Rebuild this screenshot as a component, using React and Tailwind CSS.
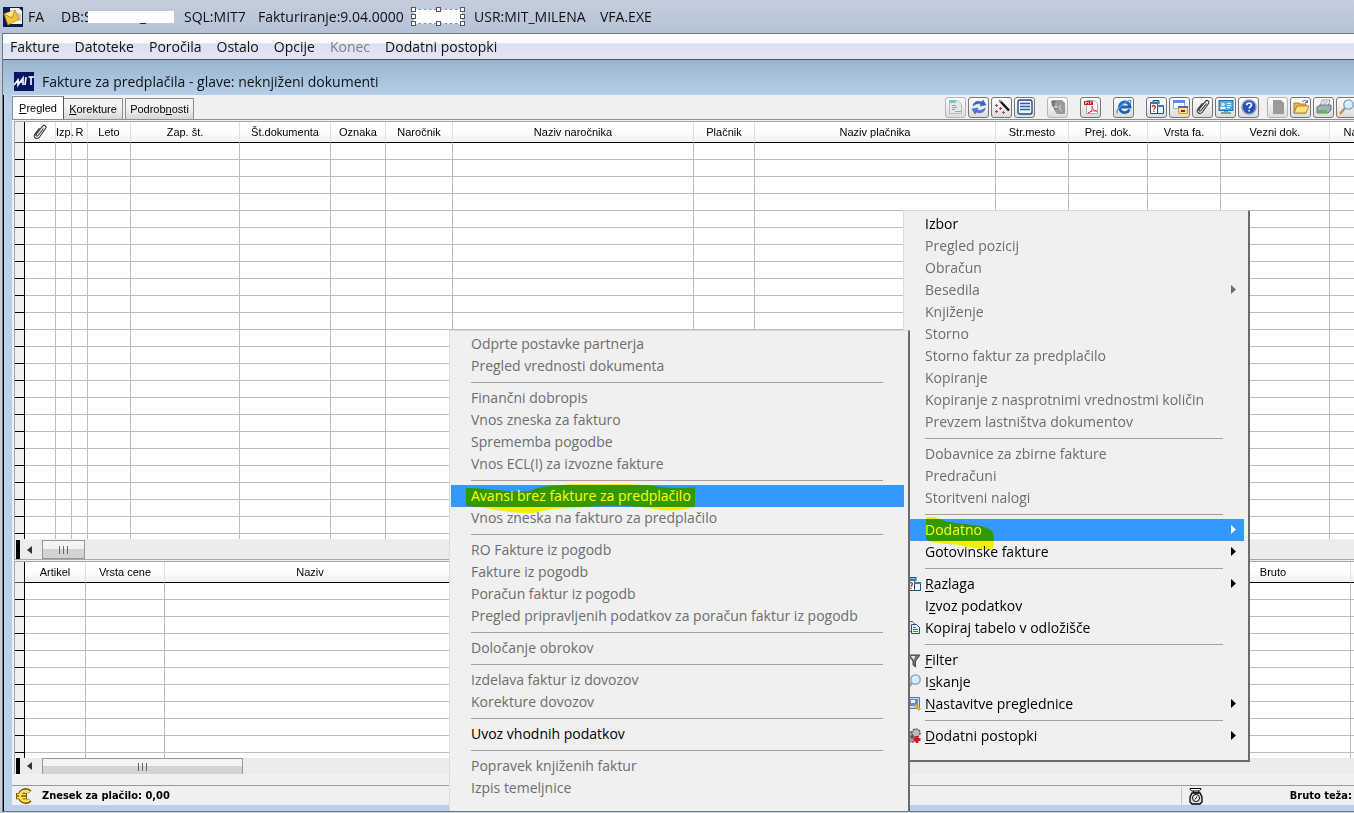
import clsx from 'clsx'

const MENU_BAR = ['Fakture', 'Datoteke', 'Poročila', 'Ostalo', 'Opcije', 'Konec', 'Dodatni postopki']

const INVOICE_COLUMNS = [
  { label: '', width: 31, clip: true },
  { label: 'Izp.', width: 16 },
  { label: 'R', width: 16 },
  { label: 'Leto', width: 43 },
  { label: 'Zap. št.', width: 109 },
  { label: 'Št.dokumenta', width: 91 },
  { label: 'Oznaka', width: 55 },
  { label: 'Naročnik', width: 67 },
  { label: 'Naziv naročnika', width: 241 },
  { label: 'Plačnik', width: 61 },
  { label: 'Naziv plačnika', width: 241 },
  { label: 'Str.mesto', width: 73 },
  { label: 'Prej. dok.', width: 79 },
  { label: 'Vrsta fa.', width: 73 },
  { label: 'Vezni dok.', width: 109 },
  { label: 'Način', width: 56 },
]

const ITEM_COLUMNS = [
  { label: 'Artikel', width: 61 },
  { label: 'Vrsta cene', width: 79 },
  { label: 'Naziv', width: 291 },
  { label: 'Količina', width: 370 },
  { label: 'Neto', width: 370 },
  { label: 'Bruto', width: 155 },
  { label: 'Tara', width: 155 },
]

const MAIN_MENU = [
  { label: 'Izbor' },
  { label: 'Pregled pozicij', disabled: true },
  { label: 'Obračun', disabled: true },
  { label: 'Besedila', disabled: true, sub: true },
  { label: 'Knjiženje', disabled: true },
  { label: 'Storno', disabled: true },
  { label: 'Storno faktur za predplačilo', disabled: true },
  { label: 'Kopiranje', disabled: true },
  { label: 'Kopiranje z nasprotnimi vrednostmi količin', disabled: true },
  { label: 'Prevzem lastništva dokumentov', disabled: true },
  null,
  { label: 'Dobavnice za zbirne fakture', disabled: true },
  { label: 'Predračuni', disabled: true },
  { label: 'Storitveni nalogi', disabled: true },
  null,
  { label: 'Dodatno', active: true, sub: true, marker: 'short' },
  { label: 'Gotovinske fakture', sub: true },
  null,
  { label: 'Razlaga', key: 0, sub: true, icon: 'explain' },
  { label: 'Izvoz podatkov', key: 1 },
  { label: 'Kopiraj tabelo v odložišče', icon: 'copy' },
  null,
  { label: 'Filter', key: 0, icon: 'filter' },
  { label: 'Iskanje', key: 1, icon: 'search' },
  { label: 'Nastavitve preglednice', key: 0, sub: true, icon: 'settings' },
  null,
  { label: 'Dodatni postopki', key: 0, sub: true, icon: 'gears' },
]

const SUB_MENU = [
  { label: 'Odprte postavke partnerja', disabled: true },
  { label: 'Pregled vrednosti dokumenta', disabled: true },
  null,
  { label: 'Finančni dobropis', disabled: true },
  { label: 'Vnos zneska za fakturo', disabled: true },
  { label: 'Sprememba pogodbe', disabled: true },
  { label: 'Vnos ECL(I) za izvozne fakture', disabled: true },
  null,
  { label: 'Avansi brez fakture za predplačilo', active: true, marker: 'long' },
  { label: 'Vnos zneska na fakturo za predplačilo', disabled: true },
  null,
  { label: 'RO Fakture iz pogodb', disabled: true },
  { label: 'Fakture iz pogodb', disabled: true },
  { label: 'Poračun faktur iz pogodb', disabled: true },
  { label: 'Pregled pripravljenih podatkov za poračun faktur iz pogodb', disabled: true },
  null,
  { label: 'Določanje obrokov', disabled: true },
  null,
  { label: 'Izdelava faktur iz dovozov', disabled: true },
  { label: 'Korekture dovozov', disabled: true },
  null,
  { label: 'Uvoz vhodnih podatkov' },
  null,
  { label: 'Popravek knjiženih faktur', disabled: true },
  { label: 'Izpis temeljnice', disabled: true },
]

const TOOL_GROUPS = [
  ['form', 'refresh', 'wand', 'list'],
  ['export'],
  ['pdf'],
  ['browser'],
  ['explain', 'windows', 'clip', 'card', 'help'],
  ['blank', 'open', 'print', 'search'],
]

const DIMMED_TOOLS = ['form', 'export', 'blank']

const ICONS = {
  form: (
    <>
      <path d="M1.500 1.500h8l4 4v9h-12z" fill="#e4e6e8" stroke="#b9bec2" />
      <path d="M1 1h7v3H1z" fill="#7fc4c9" />
      <path d="M4 6.500h4M4 8.500h5M4 10.500h3M7 12.500h6" stroke="#9aa0a5" />
    </>
  ),
  refresh: (
    <>
      <path d="M2 7c0-4 5-6 9-4l1-2 3 5-6 1 1-2C7 4 4 5 2 7z" fill="#2f6fd0" stroke="#1b4a9e" strokeWidth=".5" />
      <path d="M14 9c0 4-5 6-9 4l-1 2-3-5 6-1-1 2c3 1 6 0 8-2z" fill="#3d82e6" stroke="#1b4a9e" strokeWidth=".5" />
    </>
  ),
  wand: (
    <>
      <path d="M6 2l9 9.500" stroke="#111" strokeWidth="2.400" />
      <path d="M5 1l2 2" stroke="#999" strokeWidth="2" />
      <path d="M1 6.500h3M2.500 5v3M5 9.500h3M6.500 8v3M1 12.500h3M2.500 11v3M8 13.500h3M9.500 12v3" stroke="#a4475a" />
    </>
  ),
  list: (
    <>
      <rect x="1" y="1" width="14" height="14" rx="2" fill="#eef4fc" stroke="#234a86" strokeWidth="1.400" />
      <path d="M3 4.500h10M3 7.500h10M3 10.500h10" stroke="#2e5ea6" strokeWidth="1.400" />
    </>
  ),
  export: (
    <>
      <path d="M4 1h8l3 3v11H7l-3-4z" fill="#9a9a9a" />
      <path d="M1 2l3-1 3 3 1 4-2 3-4-4z" fill="#777" />
      <path d="M6 4v5M4 7l2 2 2-2M11 6c-2 2-2 4 1 6" stroke="#e8e8e8" fill="none" />
    </>
  ),
  pdf: (
    <>
      <path d="M3.500 1.500h8l3 3v10h-11z" fill="#fff" stroke="#a9a9a9" />
      <path d="M1 2h9v4H1z" fill="#c9252c" />
      <path d="M2.500 5V3H4v1H3M5.500 3v2M7.500 5V3H9" stroke="#fff" strokeWidth=".6" fill="none" />
      <path d="M5 14c3-1 5-4 4-7 0 3 2 5 5 5-3-.5-6 0-9 2z" fill="none" stroke="#d8434a" />
    </>
  ),
  browser: (
    <>
      <path d="M13.500 10.500A5.300 5.300 0 1 1 14 8H5" fill="none" stroke="#1b62b0" strokeWidth="2.800" />
      <path d="M1.500 14.500C-1 12 6 4 13 1.500c2.500-.5 2 2 1 3.500" fill="none" stroke="#4c9be0" strokeWidth="1.300" />
    </>
  ),
  explain: (
    <>
      <path d="M4 3V1.500h6V5" fill="#8cc0e8" stroke="#1f4e79" />
      <path d="M1.500 3.500h7v11h-7z" fill="#fff" stroke="#1f4e79" />
      <path d="M1 3h8v2H1z" fill="#2f7fb8" />
      <path d="M3.200 8c0-2 3.200-2 3.200 0 0 1.200-1.500 1.200-1.500 2.700M4.900 11.800v1.200" stroke="#d22" strokeWidth="1.300" fill="none" />
      <path d="M8.500 6.500h6v8h-6z" fill="#e9f3fb" stroke="#1f4e79" />
      <path d="M8 6h7v2H8z" fill="#2f7fb8" />
    </>
  ),
  windows: (
    <>
      <path d="M1.500 1.500h11v8h-11z" fill="#fff" stroke="#8fa9d6" />
      <path d="M1 1h12v3H1z" fill="#5b8be0" />
      <path d="M6.500 7.500h9v7h-9z" fill="#ffe37a" stroke="#c9a227" />
      <path d="M6 7h10v2H6z" fill="#3f6fd0" />
      <path d="M9 12h4" stroke="#a00" strokeWidth="1.800" />
    </>
  ),
  clip: (
    <path
      d="M11.500 4.500L6 11.500c-1 1.300-2.800 0-1.800-1.400l6.300-7.800c1.800-2 4.500 0 3 2.200L7.500 13c-2.500 3.200-7 .5-4.700-2.800L7.500 4"
      fill="none"
      stroke="#333"
      strokeWidth="1.100"
    />
  ),
  card: (
    <>
      <rect x="1" y="1.500" width="14" height="10" fill="#58aee6" stroke="#1f6fae" />
      <circle cx="5" cy="5.500" r="1.800" fill="#ffe9a8" />
      <path d="M2.500 10h5V8h-5z" fill="#fff" />
      <path d="M9 4.500h4M9 6.500h4M9 8.500h3" stroke="#fff" />
      <path d="M6 12h4v1h3v2H3v-2h3z" fill="#7aa88d" />
    </>
  ),
  help: (
    <>
      <circle cx="8" cy="8" r="7" fill="#2450b8" stroke="#8c9cc0" strokeWidth="1.400" />
      <path d="M5.700 6.300c0-3 4.800-3 4.800-.2 0 1.700-2.300 1.700-2.300 3.400M8.200 11v1.600" fill="none" stroke="#fff" strokeWidth="1.700" />
    </>
  ),
  blank: <path d="M3 1h8l3 3v11H3z" fill="#9b9b9b" />,
  open: (
    <>
      <path d="M1 4h5l1 1h6v9H1z" fill="#e9b53a" stroke="#9c7420" strokeWidth=".8" />
      <path d="M1 14l3-7h12l-3 7z" fill="#ffdf7c" stroke="#9c7420" strokeWidth=".8" />
      <path d="M9 3c2-2 4-2 5 0M14.500 1v2.500H12" fill="none" stroke="#3d6ea8" />
    </>
  ),
  print: (
    <>
      <path d="M6 1h8l-2 6H4z" fill="#fff" stroke="#7a8896" strokeWidth=".8" />
      <path d="M1 8l3-2h11v5l-3 3H1z" fill="#a3afbf" stroke="#4d5a69" strokeWidth=".8" />
      <path d="M2 11h9v3H2z" fill="#5dbb46" />
      <path d="M7 3h5M6 5h5" stroke="#9ab" />
    </>
  ),
  search: (
    <>
      <path d="M6 9l-5 6" stroke="#c98f4a" strokeWidth="2.400" />
      <circle cx="9.500" cy="5.500" r="4.700" fill="#d4edfb" stroke="#7d9cc0" strokeWidth="1.300" />
      <path d="M7 5c.5-1.500 1.500-2 3-2" fill="none" stroke="#fff" />
    </>
  ),
  copy: (
    <>
      <path d="M1.500 1.500h5l2 2v8h-7z" fill="#dce9fa" stroke="#3c62a8" />
      <path d="M5.500 4.500h5l3 3v6h-8z" fill="#f4f9ff" stroke="#2b4f98" />
      <path d="M7 7.500h3M7 9.500h5M7 11.500h5" stroke="#3c70c8" />
    </>
  ),
  filter: (
    <>
      <path d="M2 3h12l-4.500 6v6l-2.500-2V9z" fill="#777" stroke="#444" />
      <path d="M5 4h4L8 8z" fill="#f2f2f2" />
    </>
  ),
  settings: (
    <>
      <path d="M1.500 1.500h12v11h-12z" fill="#cfd9ea" stroke="#5a76a8" />
      <path d="M3 3h9v7H3z" fill="#5f8fcf" />
      <path d="M5 4h4v3H5z" fill="#e9f3ff" />
      <path d="M9 9l5 5" stroke="#e5a92e" strokeWidth="3" />
    </>
  ),
  gears: (
    <>
      <circle cx="6" cy="9" r="5" fill="#a8a8a8" stroke="#555" strokeWidth="1.500" strokeDasharray="2 1" />
      <circle cx="10" cy="5" r="4" fill="#bcbcbc" stroke="#555" strokeWidth="1.500" strokeDasharray="2 1" />
      <circle cx="6" cy="9" r="1.800" fill="#555" />
      <path d="M11 8v7M7.500 11.500h7" stroke="#c81e1e" strokeWidth="3" />
    </>
  ),
}

function Icon({ name, className }) {
  return (
    <svg viewBox="0 0 16 16" className={className} aria-hidden="true">
      {ICONS[name]}
    </svg>
  )
}

function Marker({ kind }) {
  if (kind === 'long') {
    return (
      <svg viewBox="0 0 230 30" className="pointer-events-none absolute -top-px left-[15px] h-[30px] w-[230px] mix-blend-multiply" aria-hidden="true">
        <path d="M0 4C20 4 45 9 64 7c6-4 20-5 43-7h54c30 1 45 6 68 3v20c-10 3-20 4-34 3-25-5-50-5-75-3-20 2-35 0-47 5-8 2-28 1-42-2-14-3-22-3-31-4z" fill="#ff0" />
      </svg>
    )
  }
  return (
    <svg viewBox="0 0 70 34" className="pointer-events-none absolute -top-[2px] left-5 h-[34px] w-[70px] mix-blend-multiply" aria-hidden="true">
      <path d="M1 0c9-1 14 2 19 4 14 4 40 2 48 11 1 5 1 11 0 17-10 2-21-2-34-4C20 26 5 27 1 22z" fill="#ff0" />
    </svg>
  )
}

function MenuLabel({ label, hotkey }) {
  if (hotkey === undefined) return label
  return (
    <>
      {label.slice(0, hotkey)}
      <span className="underline underline-offset-2">{label[hotkey]}</span>
      {label.slice(hotkey + 1)}
    </>
  )
}

function Menu({ items, className }) {
  return (
    <div role="menu" className={clsx('absolute border-t border-r-2 border-l border-t-[#d8d8d8] border-r-[#6b6b6b] border-l-[#dcdcdc] bg-[#f0f0f0] pt-[2px] pl-px', className)}>
      {items.map((item, i) =>
        item ? (
          <button
            key={item.label}
            type="button"
            role="menuitem"
            disabled={item.disabled}
            className={clsx(
              'flex h-[22px] w-full items-center pr-2 text-left whitespace-nowrap',
              item.disabled && 'text-[#6d6d6d]',
              item.active ? 'relative bg-[#3399ff] text-white' : !item.disabled && 'text-black',
            )}
          >
            <span className="flex w-5 shrink-0 justify-end pr-[3px]">
              {item.icon && <Icon name={item.icon} className="size-4" />}
            </span>
            <span className="grow">
              <MenuLabel label={item.label} hotkey={item.key} />
            </span>
            {item.sub && (
              <svg viewBox="0 0 5 11" className="h-[11px] w-[5px]" aria-hidden="true">
                <path d="M0 0l5 4.500L0 9z" fill="currentColor" />
              </svg>
            )}
            {item.marker && <Marker kind={item.marker} />}
          </button>
        ) : (
          <div key={i} role="separator" className="mr-[21px] ml-5 h-[10px] pt-[5px]">
            <div className="h-px bg-[#a0a0a0]" />
          </div>
        ),
      )}
    </div>
  )
}

function Grid({ label, columns, rows }) {
  const total = columns.reduce((sum, c) => sum + c.width, 10)
  return (
    <table aria-label={label} className="table-fixed border-separate border-spacing-0 bg-white" style={{ width: total }}>
      <colgroup>
        <col style={{ width: 10 }} />
        {columns.map((c, i) => (
          <col key={i} style={{ width: c.width }} />
        ))}
      </colgroup>
      <thead>
        <tr className="h-[21px]">
          <th className="border-r border-b border-r-black border-b-[#555] bg-[#f0f0f0] p-0" />
          {columns.map((c, i) => (
            <th
              key={i}
              scope="col"
              className="border-r border-b border-r-[#dedfe1] border-b-black bg-linear-to-b from-white from-45% to-[#eff0f2] p-0 text-[11px] leading-[14px] font-normal whitespace-nowrap"
            >
              {c.clip ? <Icon name="clip" className="mx-auto size-4" /> : c.label}
            </th>
          ))}
        </tr>
      </thead>
      <tbody>
        {Array.from({ length: rows }, (_, r) => (
          <tr key={r} className="h-[17px]">
            <td className="border-r border-b border-black bg-[#f0f0f0] p-0" />
            {columns.map((c, i) => (
              <td key={i} className="border-r border-b border-[#bdbdbd] p-0" />
            ))}
          </tr>
        ))}
      </tbody>
    </table>
  )
}

function ScrollBar({ className, thumb }) {
  return (
    <div className={clsx('flex shrink-0 items-stretch bg-[#ececec] pl-px', className)}>
      <div className="w-1 bg-black" />
      <button type="button" aria-label="Pomik levo" className="flex w-[22px] items-center justify-center pr-1">
        <svg viewBox="0 0 5 8" className="h-2 w-[5px]" aria-hidden="true">
          <path d="M5 0v8L0 4z" fill="#333" />
        </svg>
      </button>
      <div className={clsx('flex items-center justify-center gap-[3px] border border-[#979797] bg-linear-to-b from-[#f3f3f3] from-45% to-[#d2d3d6] to-50%', thumb)}>
        <span className="h-2 w-px bg-[#666]" />
        <span className="h-2 w-px bg-[#666]" />
        <span className="h-2 w-px bg-[#666]" />
      </div>
    </div>
  )
}

function Handle({ className }) {
  return <span className={clsx('absolute size-[5px] border border-[#555] bg-white', className)} />
}

function TitleBar() {
  return (
    <header className="flex h-[33px] shrink-0 items-center bg-linear-to-b from-[#c6cddd] to-[#b3c4d6] pl-[3px] whitespace-nowrap">
      <svg viewBox="0 0 20 20" className="size-5" aria-hidden="true">
        <rect width="20" height="20" fill="#0b1d4f" />
        <path d="M7 1h9l3 3v13H8z" fill="#f3f0e4" />
        <path d="M15 6v8M17 7v7" stroke="#9aa" />
        <path d="M1 7l11-4 4 9-11 6z" fill="#f4c534" stroke="#b8860b" strokeWidth=".7" />
        <path d="M1 7l8 4 3-8" fill="#ffe58a" stroke="#a87a10" strokeWidth=".8" />
      </svg>
      <span className="ml-[5px] w-[33px]">FA</span>
      <span className="w-[27px]">DB:S</span>
      <span className="relative flex h-3 w-[86px] items-end justify-center bg-white pl-6 leading-3">_</span>
      <span className="ml-[10px] w-[74px]">SQL:MIT7</span>
      <span className="w-[155px]">Fakturiranje:9.04.0000</span>
      <span className="relative h-[15px] w-[50px] border border-dashed border-[#6d9bd0] bg-white">
        <Handle className="-top-[3px] -left-[3px]" />
        <Handle className="-top-[3px] left-[22px]" />
        <Handle className="-top-[3px] -right-[3px]" />
        <Handle className="top-1 -left-[3px]" />
        <Handle className="top-1 -right-[3px]" />
        <Handle className="-bottom-[3px] -left-[3px]" />
        <Handle className="-bottom-[3px] left-[22px]" />
        <Handle className="-right-[3px] -bottom-[3px]" />
      </span>
      <span className="ml-[11px] w-[126px]">USR:MIT_MILENA</span>
      <span>VFA.EXE</span>
    </header>
  )
}

function Tabs() {
  return (
    <div role="tablist" className="flex items-end text-[11px] leading-[14px]">
      <button type="button" role="tab" aria-selected="true" className="h-[23px] w-[52px] border-t border-r border-l border-[#8c8e92] border-r-[#555] bg-white">
        <u>P</u>regled
      </button>
      <button type="button" role="tab" aria-selected="false" className="mr-[2px] h-[21px] w-[59px] border-t border-r border-[#8c8e92] bg-linear-to-b from-[#f2f2f2] from-45% to-[#d6d6d6]">
        <u>K</u>orekture
      </button>
      <button type="button" role="tab" aria-selected="false" className="h-[21px] w-[69px] border-t border-r border-l border-[#8c8e92] bg-linear-to-b from-[#f2f2f2] from-45% to-[#d6d6d6]">
        Podrob<u>n</u>osti
      </button>
    </div>
  )
}

function Toolbar() {
  return (
    <div role="toolbar" aria-label="Orodja" className="-mr-[3px] ml-auto flex items-center gap-3">
      {TOOL_GROUPS.map((group, g) => (
        <div key={g} className={clsx('flex gap-[2px]', g === 5 && '-ml-1')}>
          {group.map((name) => (
            <button
              key={name}
              type="button"
              aria-label={name}
              className={clsx(
                'flex size-[21px] items-center justify-center rounded-[3px] border bg-linear-to-b from-white to-[#dcdcdc]',
                DIMMED_TOOLS.includes(name) ? 'border-[#b5b5b5]' : 'border-[#777]',
              )}
            >
              <Icon name={name} className="size-4" />
            </button>
          ))}
        </div>
      ))}
    </div>
  )
}

function StatusBar() {
  return (
    <footer className="flex h-5 shrink-0 items-center border-t border-[#9a9a9a] bg-[#f0f0f0] pt-px pl-1 font-['DejaVu_Sans_Condensed','DejaVu_Sans',sans-serif] text-[11px] leading-[14px] font-bold">
      <svg viewBox="0 0 16 16" className="size-4" aria-hidden="true">
        <path d="M14 4C10 0 4 3 4 8s6 8 10 4" fill="none" stroke="#7a4a00" strokeWidth="4" />
        <path d="M0 6.500h11M0 9.800h11" stroke="#7a4a00" strokeWidth="3" />
        <path d="M13.500 4.200C10 1 4 3.500 4 8s6 7 9.500 3.800" fill="none" stroke="#ffe34d" strokeWidth="2.400" />
        <path d="M1 6.500h9M1 9.800h9" stroke="#ffe34d" strokeWidth="1.500" />
      </svg>
      <span className="ml-[10px]">Znesek za plačilo: 0,00</span>
      <div className="ml-auto flex w-[173px] items-center justify-between border-l border-[#c4c4c4] pr-[2px] pl-[6px]">
        <svg viewBox="0 0 16 18" className="h-[18px] w-4" aria-hidden="true">
          <path d="M2 1.500h11c0 2-2 2.500-3 2.500H5c-1 0-3-.5-3-2.500zM5 4l1 2h4l1-2" fill="#fff" stroke="#000" />
          <path d="M4 6h8l2 4v5l-2 2H4l-2-2v-5z" fill="#ddd" stroke="#000" strokeWidth="1.300" />
          <circle cx="8" cy="11" r="3.500" fill="#fff" stroke="#000" />
          <path d="M7 12.500l2-3" stroke="#000" />
        </svg>
        <span>Bruto teža:</span>
      </div>
    </footer>
  )
}

export default function App() {
  return (
    <div className="relative flex h-screen min-h-[600px] flex-col overflow-hidden bg-[#c3cfdd] pb-px font-['Open_Sans','Noto_Sans',sans-serif] text-[14px] leading-[20px] text-[#111]">
      <TitleBar />
      <div className="ml-[2px] flex min-h-0 flex-1 flex-col border-t border-b border-l border-[#6f7780]">
        <nav className="flex h-[26px] shrink-0 items-center gap-[15px] border-b border-[#4a5058] bg-linear-to-b from-[#fafbfd] from-35% via-[#dcdff0] via-40% to-[#e3e6f5] pl-[7px]">
          {MENU_BAR.map((item) => (
            <button key={item} type="button" disabled={item === 'Konec'} className="disabled:text-[#7d7f88]">
              {item}
            </button>
          ))}
        </nav>
        <div className="flex h-[35px] shrink-0 items-center bg-linear-to-b from-[#9ab3cf] to-[#b5cfe8] pt-2 pl-[11px]">
          <svg viewBox="0 0 20 19" className="h-[19px] w-5" aria-hidden="true">
            <rect width="20" height="19" fill="#0a1560" />
            <path d="M0 13l4-5v5l5-7v7M4 10h4M12 5l-1 8M14.500 5H20M17 5v8" fill="none" stroke="#fff" strokeWidth="1.600" />
          </svg>
          <h1 className="ml-2">Fakture za predplačila - glave: neknjiženi dokumenti</h1>
        </div>
        <main className="flex min-h-0 flex-1 flex-col border-l border-black bg-[#b9cfea] pb-[6px] pl-2">
          <div className="flex min-h-0 flex-1 flex-col bg-[#f0f0f0] font-['Liberation_Sans',Arial,sans-serif] text-black">
            <div className="flex h-[25px] shrink-0 items-end overflow-hidden border-b border-[#8c8e92]">
              <Tabs />
              <div className="ml-auto flex self-center">
                <Toolbar />
              </div>
            </div>
            <section className="mt-px ml-[2px] flex min-h-0 flex-1 flex-col border-t border-l border-[#a5a7aa]">
              <div className="min-h-0 flex-1 overflow-hidden">
                <Grid label="Fakture za predplačila" columns={INVOICE_COLUMNS} rows={60} />
              </div>
              <ScrollBar className="mt-px h-5 border-b border-[#a5a7aa]" thumb="w-[43px]" />
            </section>
            <section className="mt-px ml-[2px] flex shrink-0 flex-col border-t border-l border-[#a5a7aa]">
              <div className="h-[196px] overflow-hidden">
                <Grid label="Postavke" columns={ITEM_COLUMNS} rows={11} />
              </div>
              <ScrollBar className="h-4" thumb="w-[201px] border-b-0" />
            </section>
            <div className="h-[11px] shrink-0" />
            <StatusBar />
          </div>
        </main>
      </div>

      <Menu items={MAIN_MENU} className="top-[210px] left-[903px] w-[347px] border-b-2 border-b-[#6b6b6b] pr-1 pb-[13px]" />
      <Menu items={SUB_MENU} className="top-[330px] left-[449px] w-[461px] pr-1 pb-[12px]" />
    </div>
  )
}
